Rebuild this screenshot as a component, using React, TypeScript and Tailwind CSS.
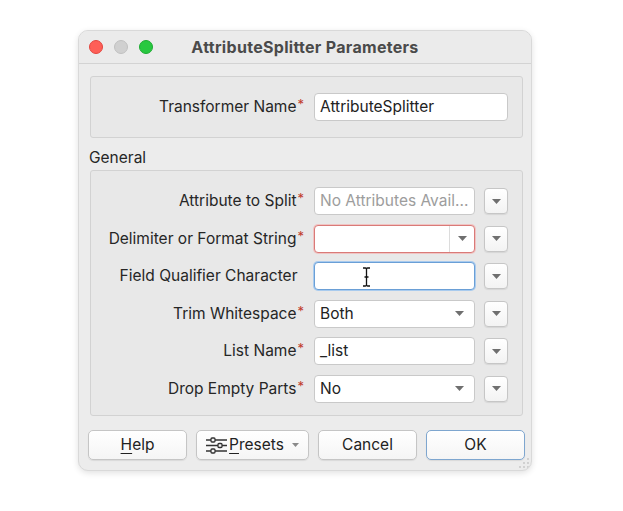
import React from "react";

const font = { fontFamily: "Inter, 'Liberation Sans', sans-serif" };

function Caret({ className = "" }: { className?: string }) {
  return (
    <svg width="9" height="5" viewBox="0 0 9 5" className={className}>
      <path d="M0 0 L9 0 L4.5 5 Z" fill="#6f6f6f" />
    </svg>
  );
}

function SideButton() {
  return (
    <div className="w-[24px] h-[26px] rounded-[4px] border border-[#c6c6c6] bg-gradient-to-b from-white to-[#f3f3f3] shadow-[0_1px_1px_rgba(0,0,0,0.08)] flex items-center justify-center">
      <Caret />
    </div>
  );
}

function Label({ text, required }: { text: string; required?: boolean }) {
  return (
    <div className="flex justify-end items-start text-[15.5px] text-[#262626] leading-[20px] pr-[1px]">
      <span>{text}</span>
      <span className={required ? "text-[#c0392b] text-[13px] leading-[14px] ml-[1px]" : "invisible text-[13px] leading-[14px]"}>
        *
      </span>
    </div>
  );
}

function Field({
  value,
  placeholder,
  kind = "text",
  state,
  children,
}: {
  value?: string;
  placeholder?: string;
  kind?: "text" | "select" | "combo";
  state?: "error" | "focus";
  children?: React.ReactNode;
}) {
  const border =
    state === "error"
      ? "border-[#d97a78] shadow-[0_0_0_1px_#f0c4c3]"
      : state === "focus"
      ? "border-[#6a9fd6] shadow-[0_0_0_1px_#a9cbee]"
      : "border-[#c9c9c9]";
  return (
    <div
      className={
        "relative h-[28px] rounded-[4px] border bg-white flex items-center text-[15.5px] leading-[20px] " +
        border
      }
    >
      <span className={"pl-[5px] flex-1 truncate " + (placeholder ? "text-[#9d9d9d]" : "text-[#222]")}>
        {value ?? placeholder}
      </span>
      {kind === "select" && <Caret className="mr-[10px]" />}
      {kind === "combo" && (
        <div className="h-full w-[25px] border-l border-[#dcdcdc] flex items-center justify-center">
          <Caret />
        </div>
      )}
      {children}
    </div>
  );
}

function IBeam() {
  return (
    <svg width="9" height="20" viewBox="0 0 9 20" className="absolute left-[47px] top-[4px]">
      <path
        d="M1 1 H3.5 Q4.5 1 4.5 2.5 Q4.5 1 5.5 1 H8 M4.5 2.5 V17.5 M1 19 H3.5 Q4.5 19 4.5 17.5 Q4.5 19 5.5 19 H8 M2.5 10 H6.5"
        stroke="#fff"
        strokeWidth="3"
        fill="none"
      />
      <path
        d="M1 1 H3.5 Q4.5 1 4.5 2.5 Q4.5 1 5.5 1 H8 M4.5 2.5 V17.5 M1 19 H3.5 Q4.5 19 4.5 17.5 Q4.5 19 5.5 19 H8 M2.5 10 H6.5"
        stroke="#111"
        strokeWidth="1.3"
        fill="none"
      />
    </svg>
  );
}

function SlidersIcon() {
  return (
    <svg width="21" height="17" viewBox="0 0 21 17" className="mr-[2px]">
      <g stroke="#333" strokeWidth="1.4" fill="none">
        <line x1="0" y1="3" x2="21" y2="3" />
        <line x1="0" y1="8.5" x2="21" y2="8.5" />
        <line x1="0" y1="14" x2="21" y2="14" />
      </g>
      <g fill="#f4f4f4" stroke="#333" strokeWidth="1.3">
        <rect x="5" y="1" width="4" height="4" rx="1" />
        <rect x="12" y="6.5" width="4" height="4" rx="1" />
        <rect x="5" y="12" width="4" height="4" rx="1" />
      </g>
    </svg>
  );
}

function Btn({ children, primary }: { children: React.ReactNode; primary?: boolean }) {
  return (
    <div
      className={
        "h-[30px] rounded-[5px] border flex items-center justify-center text-[15.5px] leading-[20px] text-[#222] bg-gradient-to-b from-white to-[#f5f5f5] shadow-[0_1px_1px_rgba(0,0,0,0.08)] " +
        (primary ? "border-[#7ea6cf] shadow-[0_0_0_1px_#c6dcf2]" : "border-[#c5c5c5]")
      }
    >
      {children}
    </div>
  );
}

const rows = [
  { label: "Attribute to Split", required: true, field: <Field placeholder="No Attributes Avail..." /> },
  { label: "Delimiter or Format String", required: true, field: <Field value="" kind="combo" state="error" /> },
  {
    label: "Field Qualifier Character",
    required: false,
    field: (
      <Field value="" state="focus">
        <IBeam />
      </Field>
    ),
  },
  { label: "Trim Whitespace", required: true, field: <Field value="Both" kind="select" /> },
  { label: "List Name", required: true, field: <Field value="_list" /> },
  { label: "Drop Empty Parts", required: true, field: <Field value="No" kind="select" /> },
];

export default function App() {
  return (
    <div className="w-full h-[511px] bg-white pl-[78px] pt-[30px]" style={font}>
      <div className="relative w-[454px] h-[441px] rounded-[10px] bg-[#ececec] border border-[#d9d9d9] shadow-[0_2px_6px_rgba(0,0,0,0.12)] overflow-hidden">
        <div className="h-[33px] flex items-center border-b border-[#d3d3d3] bg-[#ebebeb] relative">
          <div className="flex items-center gap-[11px] pl-[10px]">
            <div className="w-[14px] h-[14px] rounded-full bg-[#fe5f57] border border-[#e2463f]" />
            <div className="w-[14px] h-[14px] rounded-full bg-[#d0d0d0] border border-[#c0c0c0]" />
            <div className="w-[14px] h-[14px] rounded-full bg-[#28c840] border border-[#1eaa32]" />
          </div>
          <div className="absolute inset-0 flex items-center justify-center text-[16px] tracking-[0.3px] font-bold text-[#4a4a4a]">
            AttributeSplitter Parameters
          </div>
        </div>

        <div className="pl-[11px] pr-[8px] pt-[12px]">
          <div className="h-[62px] rounded-[3px] border border-[#d2d2d2] bg-[#e8e8e8] grid grid-cols-[1fr_194px] gap-x-[9px] items-center pr-[14px]">
            <Label text="Transformer Name" required />
            <Field value="AttributeSplitter" />
          </div>

          <div className="text-[15.5px] text-[#262626] leading-[16px] pt-[12px] pb-[4px] -ml-[1px]">General</div>

          <div className="h-[246px] rounded-[3px] border border-[#d2d2d2] bg-[#e8e8e8] grid grid-cols-[1fr_161px_24px] gap-x-[9px] gap-y-[9.6px] content-start items-center pt-[16px] pr-[14px]">
            {rows.map((r) => (
              <React.Fragment key={r.label}>
                <Label text={r.label} required={r.required} />
                {r.field}
                <SideButton />
              </React.Fragment>
            ))}
          </div>
        </div>

        <div className="grid grid-cols-[99px_113px_99px_99px] gap-x-[9px] pl-[9px] pt-[14px]">
          <Btn>
            <span>
              <span className="underline underline-offset-[3px]">H</span>elp
            </span>
          </Btn>
          <Btn>
            <SlidersIcon />
            <span>
              <span className="underline underline-offset-[3px]">P</span>resets
            </span>
            <svg width="7" height="4" viewBox="0 0 7 4" className="ml-[8px]">
              <path d="M0 0 L7 0 L3.5 4 Z" fill="#8a8a8a" />
            </svg>
          </Btn>
          <Btn>Cancel</Btn>
          <Btn primary>OK</Btn>
        </div>

        <svg width="12" height="12" viewBox="0 0 12 12" className="absolute right-[1px] bottom-[1px]">
          <g fill="#c4c4c4">
            <circle cx="10" cy="2" r="0.9" />
            <circle cx="6" cy="6" r="0.9" />
            <circle cx="10" cy="6" r="0.9" />
            <circle cx="2" cy="10" r="0.9" />
            <circle cx="6" cy="10" r="0.9" />
            <circle cx="10" cy="10" r="0.9" />
          </g>
        </svg>
      </div>
    </div>
  );
}
